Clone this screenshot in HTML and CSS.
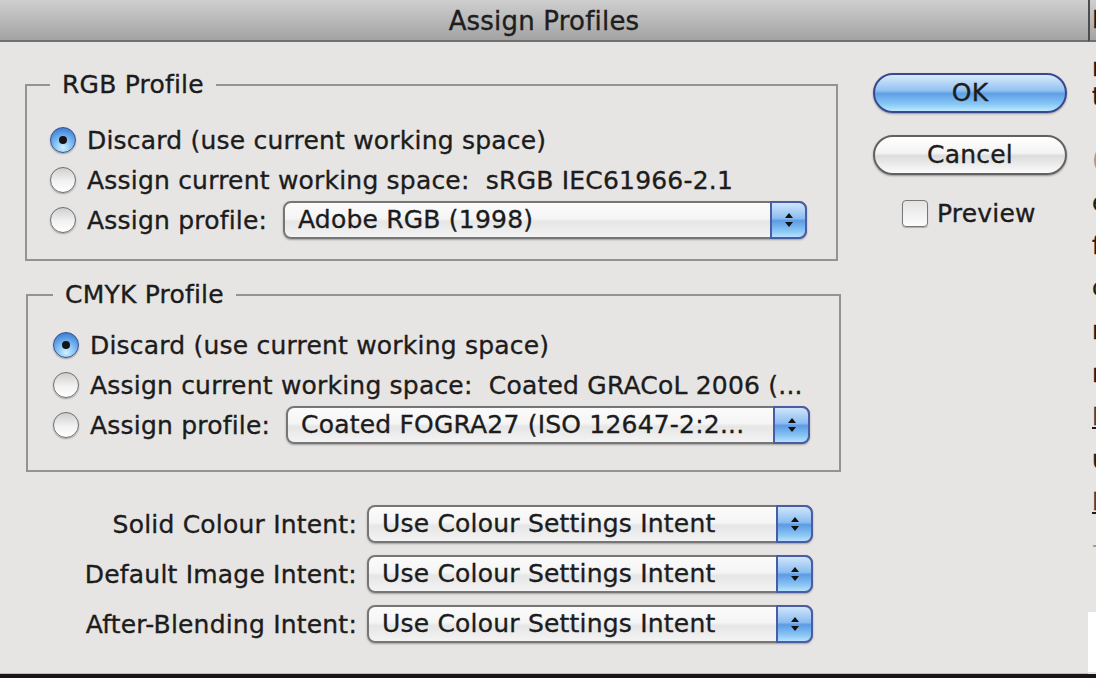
FILE: index.html
```html
<!DOCTYPE html>
<html lang="en">
<head>
<meta charset="utf-8">
<title>Assign Profiles</title>
<link rel="stylesheet" href="styles.css">
</head>
<body>
<div class="screen">
  <div class="dialog">
    <div class="titlebar">Assign Profiles</div>
    <div class="content">
      <div class="main">
        <fieldset class="group group-rgb">
          <legend>RGB Profile</legend>
          <div class="row"><span class="radio on"></span><span>Discard (use current working space)</span></div>
          <div class="row"><span class="radio"></span><span>Assign current working space:&nbsp; sRGB IEC61966-2.1</span></div>
          <div class="row"><span class="radio"></span><span class="row-label">Assign profile:</span>
            <div class="popup popup-wide"><span class="popup-text">Adobe RGB (1998)</span><span class="stepper"><svg width="10" height="18" viewBox="0 0 10 18"><path d="M5 2 L9 7 L1 7 Z M1 11 L9 11 L5 16 Z" fill="#111"/></svg></span></div>
          </div>
        </fieldset>

        <fieldset class="group group-cmyk">
          <legend>CMYK Profile</legend>
          <div class="row"><span class="radio on"></span><span>Discard (use current working space)</span></div>
          <div class="row"><span class="radio"></span><span>Assign current working space:&nbsp; Coated GRACoL 2006 (...</span></div>
          <div class="row"><span class="radio"></span><span class="row-label">Assign profile:</span>
            <div class="popup popup-wide"><span class="popup-text">Coated FOGRA27 (ISO 12647-2:2...</span><span class="stepper"><svg width="10" height="18" viewBox="0 0 10 18"><path d="M5 2 L9 7 L1 7 Z M1 11 L9 11 L5 16 Z" fill="#111"/></svg></span></div>
          </div>
        </fieldset>

        <div class="intents">
          <span class="intent-label">Solid Colour Intent:</span>
          <div class="popup"><span class="popup-text">Use Colour Settings Intent</span><span class="stepper"><svg width="10" height="18" viewBox="0 0 10 18"><path d="M5 2 L9 7 L1 7 Z M1 11 L9 11 L5 16 Z" fill="#111"/></svg></span></div>
          <span class="intent-label">Default Image Intent:</span>
          <div class="popup"><span class="popup-text">Use Colour Settings Intent</span><span class="stepper"><svg width="10" height="18" viewBox="0 0 10 18"><path d="M5 2 L9 7 L1 7 Z M1 11 L9 11 L5 16 Z" fill="#111"/></svg></span></div>
          <span class="intent-label">After-Blending Intent:</span>
          <div class="popup"><span class="popup-text">Use Colour Settings Intent</span><span class="stepper"><svg width="10" height="18" viewBox="0 0 10 18"><path d="M5 2 L9 7 L1 7 Z M1 11 L9 11 L5 16 Z" fill="#111"/></svg></span></div>
        </div>
      </div>

      <div class="side">
        <div class="btn btn-default">OK</div>
        <div class="btn">Cancel</div>
        <div class="check-row"><span class="checkbox"></span><span>Preview</span></div>
      </div>
    </div>
  </div>

  <div class="behind">
    <div class="behind-title">F</div>
    <div class="behind-block-a">
      <div>r</div>
      <div>t</div>
    </div>
    <div class="behind-block-b">
      <div class="faint">(</div>
      <div>e</div>
      <div>f</div>
      <div>c</div>
      <div>n</div>
      <div>r</div>
      <div class="lined">E</div>
      <div>u</div>
      <div class="lined">K</div>
      <div class="faint">-</div>
    </div>
    <div class="behind-white"></div>
  </div>
</div>
<div class="bottom-band"></div>
</body>
</html>
```

FILE: styles.css
```css
* { box-sizing: border-box; }

html, body { margin: 0; padding: 0; }

body {
  width: 1096px;
  height: 678px;
  overflow: hidden;
  background: #17121a;
  font-family: "DejaVu Sans", "Liberation Sans", sans-serif;
  font-size: 25px;
  letter-spacing: 0.2px;
  color: #1c1c1c;
  -webkit-text-stroke: 0.35px #1c1c1c;
}

.screen {
  display: flex;
  height: 674px;
}

.dialog {
  width: 1088px;
  height: 674px;
  background: #e7e5e3;
  display: flex;
  flex-direction: column;
  border-bottom: 1px solid #bdbbb9;
}

.titlebar {
  height: 42px;
  border-bottom: 2px solid #6f6f6f;
  background: linear-gradient(#cfcfcf, #a3a3a3);
  text-align: center;
  line-height: 42px;
  font-size: 26px;
  color: #1e1e1e;
}

.content {
  display: flex;
}

.main {
  width: 820px;
  margin-left: 25px;
  padding-top: 28px;
}

/* group boxes */
.group {
  margin: 0;
  border: 2px solid #939393;
  min-width: 0;
}

.group legend {
  padding: 0 12px;
  line-height: 30px;
}

.group-rgb {
  width: 813px;
  padding: 20px 23px 19px 23px;
}

.group-cmyk {
  width: 815px;
  margin: 19px 0 0 1px;
  padding: 15px 23px 25px 25px;
}

.row {
  display: flex;
  align-items: center;
  height: 40px;
  white-space: nowrap;
}

.row-label {
  width: 196px;
  flex: none;
}

.radio {
  flex: none;
  width: 26px;
  height: 26px;
  margin-right: 11px;
  border-radius: 50%;
  border: 1.5px solid #6e6e6e;
  background: linear-gradient(#cfcfcf, #f2f2f2 55%, #ffffff);
  box-shadow: 0 1px 1.5px rgba(0, 0, 0, 0.3);
  display: flex;
  align-items: center;
  justify-content: center;
}

.radio.on {
  border-color: #34508f;
  background: radial-gradient(circle at 50% 82%, #d2f0ff 0%, #8ac5f5 35%, #4b8ddc 75%, #3168bf 100%);
}

.radio.on::after {
  content: "";
  width: 8px;
  height: 8px;
  border-radius: 50%;
  background: #151515;
}

/* popup menus */
.popup {
  display: flex;
  height: 38px;
  border: 2px solid #767676;
  border-radius: 8px;
  background: linear-gradient(#fbfbfb 0%, #f5f5f5 45%, #e6e6e6 55%, #f3f3f3 100%);
  box-shadow: 0 1px 2px rgba(0, 0, 0, 0.3);
}

.popup-wide {
  width: 524px;
  flex: none;
}

.popup-text {
  flex: 1;
  padding-left: 13px;
  line-height: 34px;
  white-space: nowrap;
  overflow: hidden;
}

.stepper {
  flex: none;
  width: 37px;
  margin: -2px -2px -2px 0;
  border: 2px solid #4a5da4;
  border-radius: 0 8px 8px 0;
  background: linear-gradient(#cfe5fb 0%, #8cbdf0 45%, #5c9be4 52%, #86c2f3 80%, #b5e2fd 100%);
  display: flex;
  align-items: center;
  justify-content: center;
}

/* intents */
.intents {
  margin-top: 33px;
  display: grid;
  grid-template-columns: 332px 446px;
  column-gap: 10px;
  row-gap: 12px;
  align-items: center;
}

.intent-label {
  text-align: right;
  white-space: nowrap;
}

/* side buttons */
.side {
  width: 194px;
  margin-left: 28px;
  padding-top: 31px;
  display: flex;
  flex-direction: column;
}

.btn {
  height: 40px;
  border-radius: 20px;
  border: 2px solid #616161;
  background: linear-gradient(#ffffff 0%, #f3f3f3 45%, #dcdcdc 52%, #eeeeee 80%, #fbfbfb 100%);
  box-shadow: 0 1px 2px rgba(0, 0, 0, 0.35);
  text-align: center;
  line-height: 36px;
}

.btn + .btn {
  margin-top: 22px;
}

.btn-default {
  border-color: #37488e;
  background: linear-gradient(#d8eafb 0%, #95c3f1 42%, #5f9fe6 52%, #86c6f5 80%, #bde9ff 100%);
}

.check-row {
  display: flex;
  align-items: center;
  margin-top: 24px;
  padding-left: 29px;
  height: 28px;
}

.checkbox {
  width: 26px;
  height: 27px;
  margin-right: 9px;
  border-radius: 4px;
  border: 1.5px solid #777777;
  background: linear-gradient(#e2e2e2, #fdfdfd);
  box-shadow: 0 1px 1px rgba(0, 0, 0, 0.25);
}

/* window behind the dialog */
.behind {
  width: 8px;
  height: 674px;
  overflow: hidden;
  background: #e6e5e4;
  display: flex;
  flex-direction: column;
  white-space: nowrap;
  letter-spacing: 0;
  font-size: 24px;
}

.behind > div,
.behind-block-a > div,
.behind-block-b > div {
  padding-left: 2px;
}

.behind-title {
  height: 42px;
  flex: none;
  line-height: 40px;
  border-left: 2px solid #4c4c4c;
  border-bottom: 2px solid #6f6f6f;
  background: linear-gradient(#cfcfcf, #a3a3a3);
}

.behind-block-a {
  flex: none;
  margin-top: 12px;
  line-height: 29px;
}

.behind-block-b {
  flex: none;
  margin-top: 27px;
  line-height: 42.8px;
}

.behind .faint {
  color: #9a9a9a;
  -webkit-text-stroke: 0;
}

.behind .lined {
  color: #444;
  text-decoration: underline;
}

.behind-white {
  flex: none;
  margin-top: 45px;
  height: 60px;
  background: #ffffff;
}

.bottom-band {
  height: 4px;
  background: #1a1418;
}
```
